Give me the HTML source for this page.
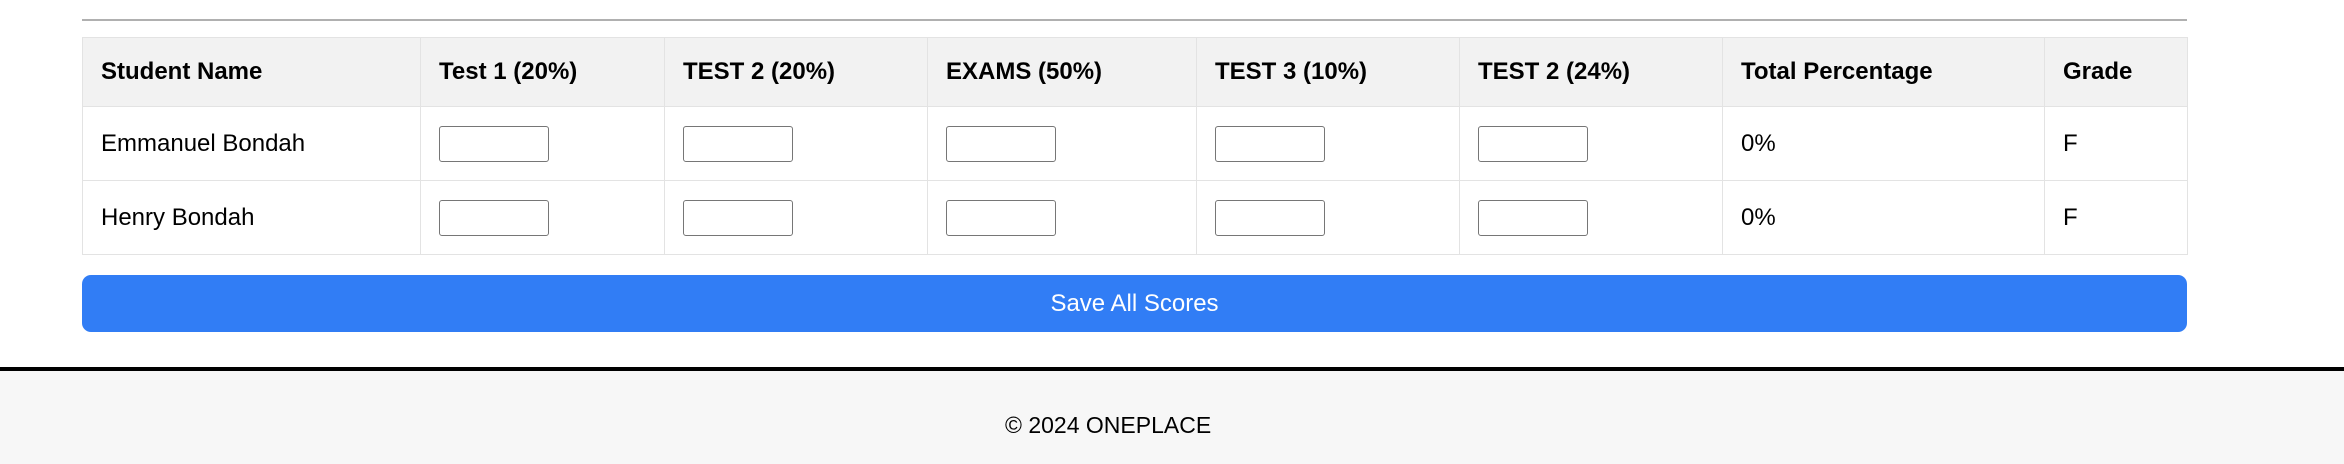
<!DOCTYPE html>
<html><head><style>
body{margin:0;width:2344px;height:464px;background:#fff;font-family:"Liberation Sans",Arial,sans-serif;position:relative;overflow:hidden}
.hr{position:absolute;left:82px;top:19px;width:2105px;height:2px;background:#b0b0b0}
table{position:absolute;left:82px;top:37px;width:2105px;border-collapse:collapse;table-layout:fixed;font-size:24px;color:#000}
td,th{border:1.5px solid #e3e3e3;padding:0 18px;text-align:left;vertical-align:middle}
th{background:#f2f2f2;height:68px;font-weight:bold}
td{height:73px}
input{width:110px;height:36px;box-sizing:border-box;border:1.5px solid #767676;border-radius:3px;margin:0;display:block}
.btn{position:absolute;left:82px;top:275px;width:2105px;height:57px;background:#317df5;border-radius:9px;color:#fff;font-size:24px;text-align:center;line-height:57px}
.foot{position:absolute;left:0;top:367px;width:2344px;height:97px;border-top:4px solid #000;background:#f7f7f7;font-size:23px;box-sizing:border-box}
.foot span{position:absolute;left:1005px;top:41px}
</style></head><body>
<div class="hr"></div>
<table>
<colgroup><col style="width:338px"><col style="width:244px"><col style="width:263px"><col style="width:269px"><col style="width:263px"><col style="width:263px"><col style="width:322px"><col style="width:143px"></colgroup>
<tr><th>Student Name</th><th>Test 1 (20%)</th><th>TEST 2 (20%)</th><th>EXAMS (50%)</th><th>TEST 3 (10%)</th><th>TEST 2 (24%)</th><th>Total Percentage</th><th>Grade</th></tr>
<tr><td>Emmanuel Bondah</td><td><input></td><td><input></td><td><input></td><td><input></td><td><input></td><td>0%</td><td>F</td></tr>
<tr><td>Henry Bondah</td><td><input></td><td><input></td><td><input></td><td><input></td><td><input></td><td>0%</td><td>F</td></tr>
</table>
<div class="btn">Save All Scores</div>
<div class="foot"><span>© 2024 ONEPLACE</span></div>
</body></html>
